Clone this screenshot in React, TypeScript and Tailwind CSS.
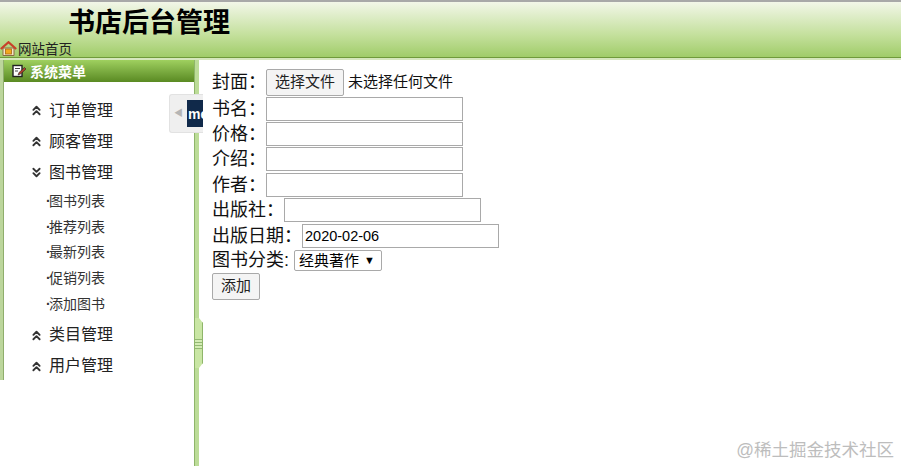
import { ChevronsDown, ChevronsUp } from 'lucide-react';

const FONT = '"Liberation Sans", "Noto Sans CJK SC", sans-serif';

function HomeIcon() {
  return (
    <svg width="17" height="16" viewBox="0 0 17 16" className="shrink-0">
      <path d="M3 7 V14.5 H14 V7 Z" fill="#f5e6c8" stroke="#8a6a45" strokeWidth="1" />
      <rect x="5.5" y="8" width="6" height="5" fill="#f2a81d" stroke="#a86a10" strokeWidth="0.8" />
      <path d="M0.8 8 L8.5 1.2 L16.2 8" fill="none" stroke="#c8402a" strokeWidth="2.2" />
    </svg>
  );
}

function EditIcon() {
  return (
    <svg width="15" height="14" viewBox="0 0 15 14" className="shrink-0">
      <rect x="1" y="1.5" width="9" height="11" fill="#fff" stroke="#222" strokeWidth="1.4" />
      <path d="M3 4.5 H8 M3 7 H6" stroke="#444" strokeWidth="1" />
      <path d="M6 11 L7 8.5 L12.5 3.5 L14 5 L8.5 10 Z" fill="#b3412c" stroke="#222" strokeWidth="0.6" />
    </svg>
  );
}

function MenuGroup({ label, open }: { label: string; open?: boolean }) {
  return (
    <div className="flex items-center h-[31px] pl-[25px] text-[16px] text-[#222]">
      {open ? (
        <ChevronsDown size={15} strokeWidth={3} className="text-[#333] mr-[5px]" />
      ) : (
        <ChevronsUp size={15} strokeWidth={3} className="text-[#333] mr-[5px]" />
      )}
      <span className="leading-none">{label}</span>
    </div>
  );
}

function SubItem({ label }: { label: string }) {
  return (
    <div className="flex items-center h-[25.6px] pl-[42px] text-[14px] text-[#333]">
      <span className="w-[3px] text-[14px] font-bold leading-none">·</span>
      <span className="leading-none">{label}</span>
    </div>
  );
}

function FieldRow({ label, gap, value }: { label: string; gap: number; value?: string }) {
  return (
    <div className="flex items-center h-[25.4px]">
      <span className="leading-none" style={{ width: gap }}>{label}</span>
      <input
        readOnly
        value={value ?? ''}
        className="w-[197px] h-[24px] border border-[#a9a9a9] bg-white px-[2px] text-[14.5px] text-black outline-none"
      />
    </div>
  );
}

export default function App() {
  return (
    <div className="w-[901px] h-[466px] overflow-hidden bg-white flex flex-col text-black" style={{ fontFamily: FONT }}>
      <header className="h-[58px] shrink-0 border-t-2 border-t-[#a8a8a8] border-b border-b-[#6f9a3a] bg-gradient-to-b from-[#f2f6e8] via-[#c4e09c] via-60% to-[#a0cc68] flex flex-col">
        <h1 className="h-[38px] pl-[68px] pt-[5px] text-[27px] font-bold leading-[32px]">书店后台管理</h1>
        <div className="flex items-end h-[17px] text-[13.5px] leading-[15px] text-[#222]">
          <HomeIcon />
          <span className="ml-[1px]">网站首页</span>
        </div>
      </header>

      <div className="h-[2px] shrink-0 bg-[#d6e7bd]" />

      <div className="flex-1 flex relative min-h-0">
        <aside className="w-[194px] shrink-0 h-[320px] border-l-[3px] border-l-[#bcd69c]">
          <div className="h-full border-l border-l-[#8fae6c]">
            <div className="h-[22px] flex items-center pl-[8px] bg-gradient-to-b from-[#9fd05f] to-[#5a8a22] text-white text-[14px] font-bold">
              <EditIcon />
              <span className="ml-[3px] pt-[2px]">系统菜单</span>
            </div>
            <div className="pt-[13px]">
              <MenuGroup label="订单管理" />
              <MenuGroup label="顾客管理" />
              <MenuGroup label="图书管理" open />
              <div className="pt-[0.5px] pb-[3.5px]">
                <SubItem label="图书列表" />
                <SubItem label="推荐列表" />
                <SubItem label="最新列表" />
                <SubItem label="促销列表" />
                <SubItem label="添加图书" />
              </div>
              <MenuGroup label="类目管理" />
              <MenuGroup label="用户管理" />
            </div>
          </div>
        </aside>

        <div className="w-[5px] shrink-0 relative z-20 border-l border-l-[#8fb56a] bg-[#bcdc98]">
          <div className="absolute left-0 top-[258px] w-[8px] h-[50px] bg-[#c9e6a4] border-r border-r-[#8fb56a] [clip-path:polygon(0_0,4px_0,8px_5px,8px_45px,4px_50px,0_50px)]">
            <div className="absolute left-0 top-[21px] w-full h-[10px] bg-[repeating-linear-gradient(180deg,#93b873_0px,#93b873_1px,#d4ecb4_1px,#d4ecb4_3px)]" />
          </div>
        </div>

        <main className="flex-1 bg-white pl-[13px] pt-[8px] text-[18px] text-[#111]">
          <div className="flex items-center h-[28px]">
            <span className="w-[54px] leading-none">封面：</span>
            <button className="w-[78px] h-[27px] border border-[#a9a9a9] rounded-[2px] bg-[#f4f4f4] text-[15px] text-[#222]">选择文件</button>
            <span className="ml-[4px] text-[15px]">未选择任何文件</span>
          </div>
          <FieldRow label="书名：" gap={54} />
          <FieldRow label="价格：" gap={54} />
          <FieldRow label="介绍：" gap={54} />
          <FieldRow label="作者：" gap={54} />
          <FieldRow label="出版社：" gap={72} />
          <FieldRow label="出版日期：" gap={90} value="2020-02-06" />
          <div className="flex items-center h-[24px]">
            <span className="w-[82px] leading-none whitespace-nowrap">图书分类:</span>
            <div className="w-[88px] h-[21px] border border-[#a9a9a9] rounded-[2px] bg-white flex items-center pl-[4px] text-[15px] text-black">
              <span className="leading-none">经典著作</span>
              <span className="ml-[5px] text-[11px] leading-none">▼</span>
            </div>
          </div>
          <button className="w-[48px] h-[27px] border border-[#a9a9a9] rounded-[2px] bg-[#f4f4f4] text-[15px] text-[#222]">添加</button>
        </main>

        <div className="absolute left-[169px] top-[34px] w-[34px] h-[39px] z-30 flex items-center overflow-hidden bg-[#efefef] border border-[#e2e2e2] border-r-0 rounded-l-[3px]">
          <span className="w-[17px] text-center text-[9px] leading-none text-[#b5b5b5]">◀</span>
          <div className="flex-1 h-[27px] bg-[#10294a] overflow-hidden flex items-center pl-[1px] text-white text-[14px] font-bold leading-none">me</div>
        </div>

        <div className="absolute right-[7px] bottom-[6px] z-20 text-[17.5px] leading-[20px] text-[#bdbdbd]">@稀土掘金技术社区</div>
      </div>
    </div>
  );
}
